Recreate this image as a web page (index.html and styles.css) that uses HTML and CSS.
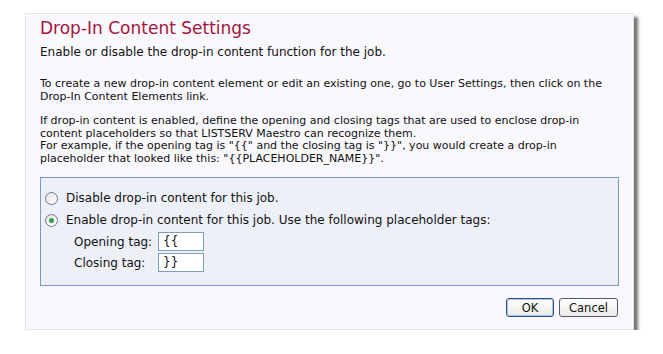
FILE: index.html
```html
<!DOCTYPE html>
<html>
<head>
	<meta charset="utf-8">
	<title>Drop-In Content Settings</title>
	<link rel="stylesheet" href="styles.css">
</head>
<body>

<div class="dialog">
	<h1 class="title">Drop-In Content Settings</h1>
	<p class="subtitle">Enable or disable the drop-in content function for the job.</p>

	<p class="info">
		To create a new drop-in content element or edit an existing one, go to User Settings, then click on the<br>
		Drop-In Content Elements link.
	</p>

	<p class="info">
		If drop-in content is enabled, define the opening and closing tags that are used to enclose drop-in<br>
		content placeholders so that LISTSERV Maestro can recognize them.<br>
		For example, if the opening tag is "{{" and the closing tag is "}}", you would create a drop-in<br>
		placeholder that looked like this: "{{PLACEHOLDER_NAME}}".
	</p>

	<div class="options">
		<label class="option">
			<span class="radio"></span>
			Disable drop-in content for this job.
		</label>
		<label class="option">
			<span class="radio checked"></span>
			Enable drop-in content for this job. Use the following placeholder tags:
		</label>
		<div class="tag-row">
			<span class="tag-label">Opening tag:</span>
			<span class="field">{{</span>
		</div>
		<div class="tag-row">
			<span class="tag-label">Closing tag:</span>
			<span class="field">}}</span>
		</div>
	</div>

	<div class="buttons">
		<button class="btn btn-default">OK</button>
		<button class="btn">Cancel</button>
	</div>
</div>

</body>
</html>
```

FILE: styles.css
```css
body {
	margin: 0;
	background: white;
	font-family: "DejaVu Sans", Verdana, sans-serif;
	color: #111;
}

.dialog {
	width: 579px;
	height: 312px;
	margin: 13px 0 0 25px;
	padding: 3px 14px 0 14px;
	background: #f9f8fc;
	border: 1px solid #e4e2ea;
	box-shadow: 4px 4px 3px rgba(0,0,0,.55);
}

.title {
	margin: 0;
	font-size: 17px;
	font-weight: normal;
	line-height: 22px;
	color: #a3163d;
}

.subtitle {
	margin: 5px 0 18px 0;
	font-size: 12px;
	line-height: 16px;
}

.info {
	margin: 0 0 12px 0;
	font-size: 11px;
	line-height: 12.5px;
}

/* --------------- */

.options {
	margin-top: 10px;
	padding: 9px 0 12px 4px;
	background: #eef0f8;
	border: 1px solid #7f97c4;
}

.option {
	display: flex;
	align-items: center;
	gap: 8px;
	height: 22px;
	font-size: 12px;
}

.radio {
	width: 11px;
	height: 11px;
	border: 1px solid #6c7a93;
	border-radius: 50%;
	background: linear-gradient(135deg, #e4e4e8, #ffffff);
	position: relative;
}
.radio.checked::after {
	content: "";
	position: absolute;
	left: 3px;
	top: 3px;
	width: 5px;
	height: 5px;
	border-radius: 50%;
	background: #3ca04a;
}

.tag-row {
	display: flex;
	align-items: center;
	height: 21px;
	padding-left: 29px;
	font-size: 12px;
}
.tag-label {
	width: 84px;
}
.field {
	width: 40px;
	height: 17px;
	line-height: 17px;
	padding-left: 4px;
	background: white;
	border: 1px solid #7f9db9;
}

/* --------------- */

.buttons {
	display: flex;
	justify-content: flex-end;
	gap: 5px;
	margin: 12px 0 0 0;
	padding-right: 1px;
}

.btn {
	height: 19px;
	padding: 0;
	font-family: "DejaVu Sans", Verdana, sans-serif;
	font-size: 11.5px;
	color: #111;
	background: linear-gradient(#ffffff, #ecebe6);
	border: 1px solid #2e4f8a;
	border-radius: 3px;
}
.btn-default {
	width: 48px;
	box-shadow: inset 0 0 0 1px #a9c3ef;
}
.btn:not(.btn-default) {
	width: 59px;
	border-color: #4d5b75;
}
```
